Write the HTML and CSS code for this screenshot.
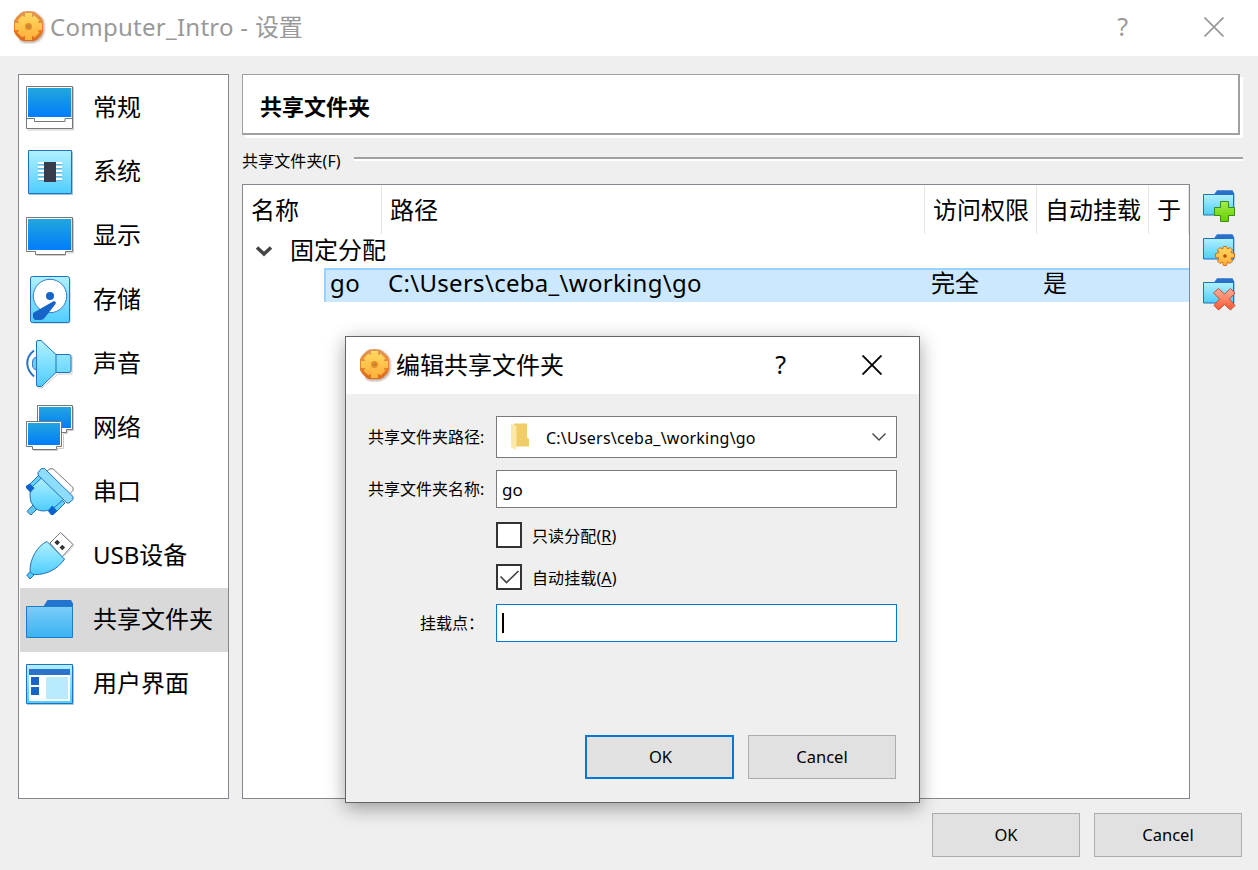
FILE: index.html
```
<!DOCTYPE html>
<html lang="zh-CN">
<head>
<meta charset="utf-8">
<title>Computer_Intro - 设置</title>
<link rel="stylesheet" href="styles.css">
</head>
<body>
<svg class="defs" width="0" height="0" aria-hidden="true">
  <defs>
    <linearGradient id="screen" x1="0" y1="0" x2="0" y2="1"><stop offset="0" stop-color="#23a6dd"/><stop offset="1" stop-color="#007dfb"/></linearGradient>
    <linearGradient id="aqua" x1="0" y1="0" x2="0" y2="1"><stop offset="0" stop-color="#b0f1ff"/><stop offset="1" stop-color="#4fcdff"/></linearGradient>
    <linearGradient id="folder" x1="0" y1="0" x2="0" y2="1"><stop offset="0" stop-color="#7dcdf8"/><stop offset="1" stop-color="#38b2f1"/></linearGradient>
    <linearGradient id="green" x1="0" y1="0" x2="0" y2="1"><stop offset="0" stop-color="#a2ee4c"/><stop offset="1" stop-color="#65d000"/></linearGradient>
    <linearGradient id="red" x1="0" y1="0" x2="0" y2="1"><stop offset="0" stop-color="#ffb09c"/><stop offset="1" stop-color="#ff5730"/></linearGradient>
    <linearGradient id="gold" x1="0" y1="0" x2="0" y2="1"><stop offset="0" stop-color="#ffd860"/><stop offset="1" stop-color="#ffb03a"/></linearGradient>
    <linearGradient id="amber" x1="0" y1="0" x2="0" y2="1"><stop offset="0" stop-color="#e09a5c"/><stop offset=".5" stop-color="#e8872c"/><stop offset="1" stop-color="#dc6a1c"/></linearGradient>
    <filter id="soft" x="-20%" y="-20%" width="140%" height="140%"><feGaussianBlur stdDeviation="1"/></filter>
    <symbol id="gear" viewBox="0 0 34 34">
      <path d="M11 3h12l4 2 4 4 1.500 4v9l-2 5-4 4-5 2h-9l-5-2z" fill="#8b6a50" opacity=".55" filter="url(#soft)"/>
      <path d="M11 1.500l5.500-.5 5.500.5 3 2 4 4 2 3.500v11l-2 3.500-4 4-3 1.500h-11l-3-1.500-4-4-2-3.500v-11l2-3.500 4-4z" fill="url(#amber)"/>
      <circle cx="16.500" cy="16.500" r="10.500" fill="url(#gold)"/>
      <path d="M13 3h7v27h-7zM3 13h27v7h-27z" fill="url(#gold)"/>
      <path d="M22.500 5.500l5 5-17 17-5-5zM5.500 10.500l5-5 17 17-5 5z" fill="url(#gold)"/>
      <circle cx="16.500" cy="16.500" r="3.500" fill="#e88d25"/><circle cx="16.500" cy="16.500" r="1.700" fill="#bd8747"/>
    </symbol>
    <symbol id="small-folder" viewBox="0 0 34 34">
      <path d="M11 4.500L14 .3h15.500l1.800 3.500v22h-3z" fill="#2a70cb"/>
      <path d="M.500 4.500h30v20.500h-30z" fill="url(#aqua)" stroke="#2171bd"/>
    </symbol>
  </defs>
</svg>
<div class="window">
  <header class="titlebar">
    <svg class="gear"><use href="#gear"/></svg>
    <h1 class="title">Computer_Intro - <span class="title-cjk">设置</span></h1>
    <span class="help">?</span>
    <svg class="close" viewBox="0 0 20 20"><path d="M.500.500l19 19M19.500.500l-19 19"/></svg>
  </header>

  <main class="content">
    <nav class="sidebar">
      <div class="item"><svg viewBox="0 0 48 48"><path d="M1.500 46h46v-43" fill="none" stroke="#ccc"/><path d="M.500 2.500h46v42h-46z" fill="#fff" stroke="#777"/><path d="M2 4h43.300v29h-43.300z" fill="url(#screen)"/><path d="M.500 34.500h8v3h30.500v-3h7.500" fill="none" stroke="#777"/></svg><span>常规</span></div>
      <div class="item"><svg viewBox="0 0 48 48"><path d="M3 46.500h43.500v-43" fill="none" stroke="#9fc4df"/><path d="M2.500 2.500h43v43h-43z" fill="url(#aqua)" stroke="#2171bd"/><path d="M12 15h24M12 19h24M12 23h24M12 27h24M12 31h24" stroke="#fff" stroke-width="2"/><path d="M12 16.500h24M12 20.500h24M12 24.500h24M12 28.500h24M12 32.500h24" stroke="#71b3d4"/><path d="M18 14h12v20h-12z" fill="#383c4a"/></svg><span>系统</span></div>
      <div class="item"><svg viewBox="0 0 48 48"><path d="M47.500 7v34h-8v2.500h-29" fill="none" stroke="#ccc"/><path d="M.500 5.500h46v34h-7v3h-30v-3h-9z" fill="#fff" stroke="#777"/><path d="M2 7h43.300v31h-43.300z" fill="url(#screen)"/></svg><span>显示</span></div>
      <div class="item"><svg viewBox="0 0 48 48"><rect x="5.500" y="1.500" width="39" height="46" rx="2" fill="#b4c9d6"/><rect x="4.500" y=".5" width="39" height="46" rx="2" fill="url(#aqua)" stroke="#2171bd"/><circle cx="24" cy="20" r="16.700" fill="#fff" stroke="#3879c5"/><circle cx="24" cy="20" r="4" fill="#1764c9"/><path d="M27 25.500c2-1 3.500.5 2.500 2.500L18.500 42q-1.500 2-4 2H9L7 41.500V37z" fill="#1764c9"/></svg><span>存储</span></div>
      <div class="item"><svg viewBox="0 0 48 48"><path d="M12 48h4L32 34h14V16" fill="none" stroke="#ccc"/><path d="M8 10.500C-1.500 18-.500 29 8 36.500" fill="none" stroke="#2b72c7" stroke-width="2"/><path d="M10 17.500c-2.500 0-3.500 2-3.500 6s1 6 3.500 6" fill="#6dcdf0" stroke="#2171bd"/><path d="M10.500 2q0-1.500 1.500-1.500h3L30 14.500h13q2 0 2 2v14q0 2-2 2H30L15.500 46.500H12q-1.500 0-1.500-1.500z" fill="url(#aqua)" stroke="#2171bd"/><path d="M30 14.500v18" stroke="#2171bd"/></svg><span>声音</span></div>
      <div class="item"><svg viewBox="0 0 48 48"><path d="M11.500 1.500h35v24h-6v3h-23v-3h-6z" fill="#fff" stroke="#777"/><path d="M13 3h32v21h-32z" fill="url(#screen)"/><path d="M47.500 3v23.500h-6v3h-4v15h-6v2h-24" fill="none" stroke="#ccc"/><path d="M.500 17.500h35v25h-5v3h-24v-3h-6z" fill="#fff" stroke="#777"/><path d="M2 19h32v22h-32z" fill="url(#screen)"/></svg><span>网络</span></div>
      <div class="item"><svg viewBox="0 0 48 48"><path d="M20 4l4-3.200h3L47 19.500v3l-4 4z" fill="#fff" stroke="#777"/><path d="M1 43.500L7 37l4 4-6 6z" fill="#62c8ef" stroke="#2171bd"/><path d="M2 18l11-11 4 4L7 22zM25 42l10-11 4 4-10 10z" fill="#62d3fa" stroke="#2171bd"/><path d="M16 9.500L5 20c-1.500 5-1 10 0 14l4 6c6 5 14 3 20-1l9.500-8.500z" fill="url(#aqua)" stroke="#2171bd"/><path d="M3.500 15.500l5 4.500-4 4.500L0 20v-2zM26 37.500l5 5-3.500 4.500H25l-3-4z" fill="#0c62cf"/><path d="M12 4.500L15.500.500h3L47 28.500v3l-4 3.500h-2L12 7z" fill="#8edcfb" stroke="#2171bd"/></svg><span>串口</span></div>
      <div class="item"><svg viewBox="0 0 48 48"><path d="M36 1.500l12 12-9 10" fill="none" stroke="#ccc"/><path d="M24 11L34.500.500 47 12.500 36 25z" fill="#fff" stroke="#777"/><path d="M31.200 7.700l2.800 2.800-2.800 2.800-2.800-2.800zM36.300 12.700l2.800 2.800-2.800 2.800-2.800-2.800z" fill="#333"/><path d="M.700 43L6 38l3.500 3.500L4 47z" fill="#54ccf6" stroke="#2171bd"/><path d="M21 9.500L38.500 27C33 36 21 43 9 42.500q-5-.5-5-4C4 27 11 14 21 9.500z" fill="url(#aqua)" stroke="#2171bd"/></svg><span>USB设备</span></div>
      <div class="item selected"><svg viewBox="0 0 48 48"><path d="M17 11l4.500-7H45l2 3.500V40h-4z" fill="#2374d1"/><path d="M.500 10.500h46v31h-46z" fill="url(#folder)" stroke="#1d7bcc"/></svg><span>共享文件夹</span></div>
      <div class="item"><svg viewBox="0 0 48 48"><path d="M1 44.500h46.500V6" fill="none" stroke="#a9c8dc"/><path d="M.500 4.500h46v39h-46z" fill="url(#aqua)" stroke="#2171bd"/><path d="M3 9h41v32H3z" fill="#fff"/><path d="M3 9h41v6H3z" fill="#2b73ca"/><path d="M5 17h8v8H5zM5 27h8v8H5z" fill="#1763c6"/><path d="M20 17h22v22H20z" fill="#b8ebfd"/></svg><span>用户界面</span></div>
    </nav>

    <section class="page">
      <h2 class="page-title">共享文件夹</h2>
      <div class="group"><span>共享文件夹(F)</span><i class="rule"></i></div>
      <div class="table-area">
        <div class="table">
          <div class="row head"><span>名称</span><span>路径</span><span>访问权限</span><span>自动挂载</span><span>于</span></div>
          <div class="row branch"><svg viewBox="0 0 18 12"><path d="M2 2.500l7 6.500 7-6.500"/></svg><span>固定分配</span></div>
          <div class="row entry"><span>go</span><span class="path">C:\Users\ceba_\working\go</span><span>完全</span><span>是</span></div>
        </div>
        <div class="tools">
          <svg viewBox="0 0 34 34"><use href="#small-folder"/><path d="M17.500 11.500h8v6h6v8h-6v6h-8v-6h-6v-8h6z" fill="url(#green)" stroke="#3b8d14"/></svg>
          <svg viewBox="0 0 34 34"><use href="#small-folder"/><path d="M20.500 12.500h3l1 2.500 2.500-1.500 2.500 2.500-1.500 2.500 3.500 1v4l-3.500.5 1.500 3-2.500 2.500-2.500-1.500-1 3.500h-3l-1-3.500-2.500 1.500-2.500-2.500 1.500-3-3.500-.5v-4l3.500-1-1.500-2.500 2.500-2.500 2.500 1.500z" fill="url(#gold)" stroke="#d86a18"/><circle cx="22" cy="22" r="1.800" fill="#b84c00"/></svg>
          <svg viewBox="0 0 34 34"><use href="#small-folder"/><path d="M15.500 10.500l6 5.500 6-5.500 4.500 4.500-5.500 6 5.500 6.500-4.500 4.500-6-5.500-6 5.500-4.500-4.500 5.500-6.500-6-6z" fill="url(#red)" stroke="#cc4a33"/></svg>
        </div>
      </div>
    </section>
  </main>

  <footer class="actions"><button class="btn">OK</button><button class="btn">Cancel</button></footer>

  <div class="dialog">
    <header class="dialog-bar">
      <svg class="gear"><use href="#gear"/></svg>
      <h2 class="title">编辑共享文件夹</h2>
      <span class="help">?</span>
      <svg class="close" viewBox="0 0 20 20"><path d="M.500.500l19 19M19.500.500l-19 19"/></svg>
    </header>
    <div class="form">
      <label>共享文件夹路径:</label>
      <div class="field combo">
        <svg class="yellow" viewBox="0 0 20 28"><path d="M4 .5h13v14l2 1.500v7.500H5z" fill="#f0cd68"/><path d="M1 .5l5.500 2.500v17.500L6 27l-5-3z" fill="#fde8a6"/></svg>
        <span>C:\Users\ceba_\working\go</span>
        <svg class="chevron" viewBox="0 0 14 8"><path d="M.500.500L7 7l6.500-6.500"/></svg>
      </div>
      <label>共享文件夹名称:</label>
      <div class="field name">go</div>
      <div class="check first"><i class="box"></i><span>只读分配(<u>R</u>)</span></div>
      <div class="check"><i class="box"><svg viewBox="0 0 22 22"><path d="M2.500 10.500l6 6L20.500 5"/></svg></i><span>自动挂载(<u>A</u>)</span></div>
      <label class="mount">挂载点：</label>
      <div class="field focus"><i class="caret"></i></div>
    </div>
    <footer class="dialog-actions"><button class="btn primary">OK</button><button class="btn">Cancel</button></footer>
  </div>
</div>
</body>
</html>
```
FILE: styles.css
```
* { box-sizing: border-box; }

body {
  margin: 0;
  font-family: "Noto Sans", "Noto Sans CJK SC", sans-serif;
  color: #000;
}

.defs { position: absolute; }

.window {
  position: relative;
  width: 1258px;
  height: 870px;
  background: #efefef;
  overflow: hidden;
  display: flex;
  flex-direction: column;
}

.titlebar {
  height: 56px;
  flex: none;
  background: #fff;
  display: flex;
  align-items: center;
  padding: 0 34px 2px 12px;
  color: #999;
}

.gear { width: 34px; height: 34px; flex: none; }

.title {
  margin: 0 auto 0 4px;
  font-size: 24px;
  line-height: 34px;
  font-weight: 400;
  white-space: nowrap;
}
.titlebar .title { letter-spacing: .27px; }
.title-cjk { letter-spacing: 0; }

.help { font-size: 25px; line-height: 34px; padding-bottom: 2px; }

.close {
  width: 20px;
  height: 20px;
  fill: none;
  stroke: currentColor;
  stroke-width: 1.7;
}
.titlebar .close { margin-left: 76px; }

.content {
  display: flex;
  gap: 13px;
  padding: 18px 15px 0 18px;
  height: 743px;
}

.sidebar {
  width: 211px;
  flex: none;
  border: 1px solid #828790;
  background: #fff;
  padding: 1px 0 0 1px;
}

.item {
  height: 64px;
  display: flex;
  align-items: center;
  gap: 19px;
  padding-left: 6px;
  font-size: 24px;
  white-space: nowrap;
}
.item svg { width: 48px; height: 48px; flex: none; overflow: visible; }
.item span { padding-bottom: 5px; }
.item.selected { background: #d9d9d9; }

.page { flex: 1; display: flex; flex-direction: column; min-width: 0; }

.page-title {
  margin: 0 3px 0 0;
  height: 61px;
  flex: none;
  border: solid #a0a0a0;
  border-width: 1px 2px 2px 1px;
  box-shadow: 3px 3px 0 #fff;
  background: #fff;
  padding: 2px 0 0 17px;
  font-size: 22px;
  line-height: 58px;
}

.group {
  height: 49px;
  flex: none;
  display: flex;
  gap: 13px;
  font-size: 16px;
  line-height: 24px;
  padding-top: 14px;
  white-space: nowrap;
  letter-spacing: .1px;
}
.rule { flex: 1; height: 4px; margin-top: 8px; background: #fff; border-top: 2px solid #a0a0a0; }

.table-area { flex: 1; display: flex; gap: 13px; }

.table {
  width: 948px;
  border: 1px solid #828790;
  background: #fff;
  font-size: 24px;
  line-height: 34px;
  padding-top: 1px;
  white-space: nowrap;
}

.row { display: grid; grid-template-columns: 139px 543px 112px 112px 40px; }
.head { height: 48px; }
.head span { border-right: 1px solid #e5e5e5; padding: 7px 0 0 8px; }
.head span:first-child { padding-left: 8px; }

.branch { height: 34px; display: flex; align-items: center; gap: 17px; padding-left: 12px; }
.branch span { padding-bottom: 3px; }
.branch svg { width: 18px; height: 12px; fill: none; stroke: #444; stroke-width: 3.5; }

.entry {
  height: 34px;
  margin-left: 81px;
  grid-template-columns: 62px 543px 112px 1fr;
  background: #cce8ff;
  border-top: 2px solid #99d1ff;
  border-left: 2px solid #99d1ff;
  line-height: 26px;
}
.entry span { padding-left: 0; }
.entry span:first-child { padding-left: 4px; letter-spacing: .4px; }
.entry .path { letter-spacing: .3px; }

.tools { display: flex; flex-direction: column; gap: 10px; padding-top: 6px; }
.tools svg { width: 34px; height: 34px; overflow: visible; }

.actions { display: flex; justify-content: flex-end; gap: 14px; padding: 14px 16px 0 0; }

.btn {
  width: 148px;
  height: 44px;
  border: 1px solid #adadad;
  border-radius: 0;
  background: #e1e1e1;
  font: 16.5px "Noto Sans", sans-serif;
  color: #000;
  padding: 0 0 2px;
}
.btn.primary { width: 149px; border: 2px solid #0078d7; padding-left: 2px; }

.dialog {
  position: absolute;
  left: 345px;
  top: 336px;
  width: 575px;
  height: 467px;
  border: 1px solid #646464;
  background: #efefef;
  box-shadow: 0 5px 18px rgba(0, 0, 0, .36);
  font-size: 16px;
}

.dialog-bar {
  height: 57px;
  background: #fff;
  display: flex;
  align-items: center;
  padding: 0 37px 2px 12px;
}
.dialog-bar .close { margin-left: 76px; stroke-width: 1.9; }

.form {
  display: grid;
  grid-template-columns: 115px 401px;
  grid-template-rows: 42px 38px 28px 32px 38px;
  row-gap: 12px;
  column-gap: 13px;
  padding: 22px 0 0 22px;
  align-items: center;
  white-space: nowrap;
  height: 341px;
  align-content: start;
}
.form label { line-height: 24px; }
.form .mount { padding-left: 52px; }

.field {
  height: 100%;
  border: 1px solid #7a7a7a;
  background: #fff;
  display: flex;
  align-items: center;
  padding: 0 5px;
}
.combo { padding: 0 10px 0 13px; }
.combo span { margin: 0 auto 0 16px; letter-spacing: .22px; padding-top: 1px; }
.yellow { width: 20px; height: 28px; }
.chevron { width: 14px; height: 8px; fill: none; stroke: #444; stroke-width: 1.4; }
.name { font-size: 17px; }
.focus { border-color: #0078d7; }
.caret { width: 2px; height: 20px; background: #000; }

.check {
  grid-column: 2;
  align-self: start;
  display: flex;
  align-items: center;
  gap: 10px;
  height: 26px;
  margin-top: 4px;
  letter-spacing: .1px;
}
.check.first { margin-top: 2px; }
.box { width: 26px; height: 26px; border: 2px solid #333; background: #fff; display: block; }
.box svg { display: block; width: 22px; height: 22px; fill: none; stroke: #444; stroke-width: 1.7; }
.check u { text-decoration-thickness: 1px; text-underline-offset: 2px; }

.dialog-actions { display: flex; gap: 14px; padding-left: 239px; }
```
